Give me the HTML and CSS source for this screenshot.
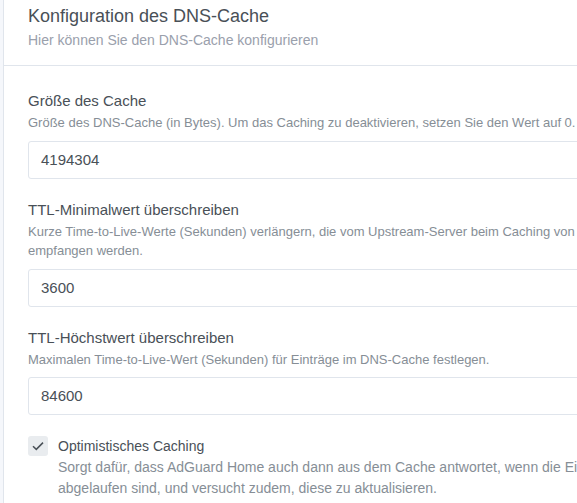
FILE: index.html
```html
<!DOCTYPE html>
<html lang="de">
<head>
<meta charset="utf-8">
<link rel="stylesheet" href="styles.css">
</head>
<body>
<div class="card">
  <div class="card-header">
    <div class="card-title">Konfiguration des DNS-Cache</div>
    <div class="card-subtitle">Hier können Sie den DNS-Cache konfigurieren</div>
  </div>
  <div class="card-body">
    <div class="field">
      <div class="label">Größe des Cache</div>
      <div class="desc">Größe des DNS-Cache (in Bytes). Um das Caching zu deaktivieren, setzen Sie den Wert auf 0.</div>
      <div class="input">4194304</div>
    </div>
    <div class="field">
      <div class="label">TTL-Minimalwert überschreiben</div>
      <div class="desc">Kurze Time-to-Live-Werte (Sekunden) verlängern, die vom Upstream-Server beim Caching von DNS-Einträgen empfangen werden.</div>
      <div class="input">3600</div>
    </div>
    <div class="field">
      <div class="label">TTL-Höchstwert überschreiben</div>
      <div class="desc">Maximalen Time-to-Live-Wert (Sekunden) für Einträge im DNS-Cache festlegen.</div>
      <div class="input">84600</div>
    </div>
    <div class="check">
      <div class="box">
        <svg width="12" height="10" viewBox="0 0 12 10"><path d="M1 5.2 L4.3 8.4 L11 1.6" fill="none" stroke="#495057" stroke-width="1.5"/></svg>
      </div>
      <div class="check-text">
        <div class="check-label">Optimistisches Caching</div>
        <div class="check-desc">Sorgt dafür, dass AdGuard Home auch dann aus dem Cache antwortet, wenn die Einträge abgelaufen sind, und versucht zudem, diese zu aktualisieren.</div>
      </div>
    </div>
  </div>
</div>
</body>
</html>
```
FILE: styles.css
```css
html, body {
  margin: 0;
  padding: 0;
  overflow: hidden;
}
body {
  background: #f5f7fb;
  font-family: "Liberation Sans", Arial, sans-serif;
  width: 577px;
  height: 503px;
}
.card {
  margin-left: 3px;
  width: 700px;
  background: #fff;
  border-left: 1px solid #e0e5ec;
}
.card-header {
  padding: 5px 24px 0;
  height: 60px;
  border-bottom: 1px solid #e0e5ec;
}
.card-title {
  font-size: 18px;
  line-height: 22px;
  color: #495057;
}
.card-subtitle {
  margin-top: 4px;
  font-size: 14px;
  line-height: 18px;
  color: #9aa0ac;
}
.card-body {
  padding: 25px 24px 24px;
  width: 645px;
}
.field {
  margin-bottom: 21px;
}
.label {
  font-size: 15px;
  line-height: 20px;
  color: #495057;
}
.desc {
  margin-top: 2px;
  font-size: 13px;
  line-height: 19.5px;
  color: #868e96;
}
.input {
  margin-top: 8px;
  height: 38px;
  box-sizing: border-box;
  border: 1px solid #e0e5ec;
  border-radius: 3px;
  padding: 0 12px;
  font-size: 15px;
  line-height: 36px;
  color: #495057;
}
.check {
  display: flex;
  gap: 10px;
  align-items: flex-start;
}
.box {
  width: 20px;
  height: 20px;
  border-radius: 3px;
  background: #e9ecef;
  display: flex;
  align-items: center;
  justify-content: center;
  flex: none;
}
.check-label {
  font-size: 14px;
  line-height: 20px;
  color: #495057;
}
.check-desc {
  margin-top: 1px;
  font-size: 14px;
  line-height: 21px;
  color: #868e96;
}
```
